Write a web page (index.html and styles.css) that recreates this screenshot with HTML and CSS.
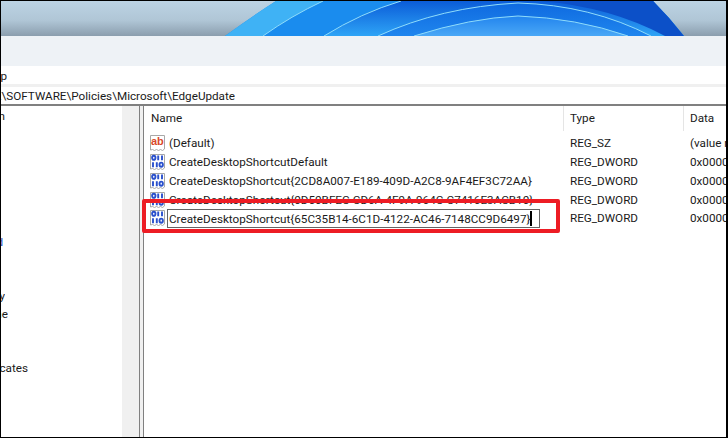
FILE: index.html
```html
<!DOCTYPE html>
<html lang="en">
<head>
  <meta charset="UTF-8">
  <meta name="viewport" content="width=device-width, initial-scale=1.0">
  <title>Registry Editor</title>
  <link rel="stylesheet" href="styles.css">
</head>
<body>
  <svg width="0" height="0" class="defs">
    <symbol id="page" viewBox="0 0 17 18">
      <path d="M1.5 1.5h14v13.5l-2 1.5-2-1-2 1-2-1-2 1-2-1-2 .5z" fill="#fff" stroke="#a8a8a8"/>
    </symbol>
    <symbol id="bin" viewBox="0 0 17 18">
      <use href="#page"/>
      <g fill="none" stroke="#2a50cc" stroke-width="1.9">
        <ellipse cx="4.8" cy="4.8" rx="1.7" ry="2.1"/>
        <path d="M9.2 2.4v4.8M13 2.4v4.8M4 9.2v5M7.8 9.2v5"/>
        <ellipse cx="12.2" cy="11.7" rx="1.7" ry="2.1"/>
      </g>
    </symbol>
  </svg>
  <div class="window">
    <div class="wallpaper">
      <svg viewBox="0 0 726 35" width="726" height="35" preserveAspectRatio="none">
        <defs>
          <linearGradient id="sky" x1="0" y1="0" x2="0" y2="1">
            <stop offset="0" stop-color="#bcd3e4"/>
            <stop offset=".55" stop-color="#b0c6d6"/>
            <stop offset="1" stop-color="#8b9eae"/>
          </linearGradient>
          <linearGradient id="band" x1="0" y1="0" x2="0" y2="1">
            <stop offset="0" stop-color="#0b5cd8"/>
            <stop offset="1" stop-color="#2ea4f6"/>
          </linearGradient>
          <linearGradient id="inner" x1="0" y1="0" x2="0" y2="1">
            <stop offset="0" stop-color="#0f6ae0"/>
            <stop offset="1" stop-color="#1f86ee"/>
          </linearGradient>
          <linearGradient id="low" x1="0" y1="0" x2="0" y2="1">
            <stop offset="0" stop-color="#2284ee"/>
            <stop offset="1" stop-color="#4aa8f6"/>
          </linearGradient>
        </defs>
        <rect width="726" height="35" fill="url(#sky)"/>
        <path d="M224 35 Q250 16 275 0 H652 Q668 16 683 35z" fill="#1a8cee"/>
        <path d="M224 35 Q250 16 275 0 H322 Q290 15 262 35z" fill="#3fb2f5"/>
        <path d="M323 35 Q360 12 400 0 H652 Q668 16 683 35z" fill="url(#band)"/>
        <path d="M377 35 Q440 6 517 2 Q590 4 650 35z" fill="url(#inner)"/>
        <path d="M413 35 Q470 17 517 15 Q575 17 627 35z" fill="url(#low)"/>
        <path d="M470 0 H652 Q668 16 683 35 H664 Q610 6 540 0z" fill="#0c50c8"/>
        <g fill="none" stroke="#8fdcfb" stroke-width="1">
          <path d="M262 35 Q290 15 322 0"/>
          <path d="M323 35 Q360 12 400 0"/>
          <path d="M377 35 Q440 6 517 2 Q590 4 650 35"/>
          <path d="M413 35 Q470 17 517 15 Q575 17 627 35"/>
        </g>
      </svg>
    </div>
    <div class="toolbar"></div>
    <div class="menu"><span class="end-clip">Help</span></div>
    <div class="address"><span class="end-clip path">Computer\HKEY_LOCAL_MACHINE\SOFTWARE\Policies\Microsoft\EdgeUpdate</span></div>
    <div class="panes">
      <div class="tree">
        <div class="tree-list">
          <div class="tree-row end-clip to-4">Windows Search</div>
          <div class="tree-row"></div>
          <div class="tree-row"></div>
          <div class="tree-row"></div>
          <div class="tree-row"></div>
          <div class="tree-row"></div>
          <div class="tree-row"></div>
          <div class="tree-row end-clip to-2 blue">Shield</div>
          <div class="tree-row"></div>
          <div class="tree-row"></div>
          <div class="tree-row end-clip to-4">Policy</div>
          <div class="tree-row end-clip to-8">Machine</div>
          <div class="tree-row"></div>
          <div class="tree-row"></div>
          <div class="tree-row end-clip to-28">SystemCertificates</div>
        </div>
        <div class="tree-scroll"></div>
      </div>
      <div class="splitter"></div>
      <div class="values">
        <div class="head">
          <div class="col col-name">Name</div>
          <div class="col col-type">Type</div>
          <div class="col col-data">Data</div>
        </div>
        <div class="row">
          <div class="cell col-name">
            <svg class="icon" viewBox="0 0 17 18"><use href="#page"/><text x="2" y="10.5" class="ab">ab</text></svg>
            <span>(Default)</span>
          </div>
          <div class="cell col-type">REG_SZ</div>
          <div class="cell col-data">(value not set)</div>
        </div>
        <div class="row">
          <div class="cell col-name">
            <svg class="icon" viewBox="0 0 17 18"><use href="#bin"/></svg>
            <span>CreateDesktopShortcutDefault</span>
          </div>
          <div class="cell col-type">REG_DWORD</div>
          <div class="cell col-data">0x00000000 (0)</div>
        </div>
        <div class="row">
          <div class="cell col-name">
            <svg class="icon" viewBox="0 0 17 18"><use href="#bin"/></svg>
            <span>CreateDesktopShortcut{2CD8A007-E189-409D-A2C8-9AF4EF3C72AA}</span>
          </div>
          <div class="cell col-type">REG_DWORD</div>
          <div class="cell col-data">0x00000000 (0)</div>
        </div>
        <div class="row">
          <div class="cell col-name">
            <svg class="icon" viewBox="0 0 17 18"><use href="#bin"/></svg>
            <span>CreateDesktopShortcut{0D50BFEC-CD6A-4F9A-964C-C7416E3ACB10}</span>
          </div>
          <div class="cell col-type">REG_DWORD</div>
          <div class="cell col-data">0x00000000 (0)</div>
        </div>
        <div class="row">
          <div class="cell col-name">
            <svg class="icon" viewBox="0 0 17 18"><use href="#bin"/></svg>
            <div class="edit"><span>CreateDesktopShortcut{65C35B14-6C1D-4122-AC46-7148CC9D6497}</span><i class="caret"></i></div>
          </div>
          <div class="cell col-type">REG_DWORD</div>
          <div class="cell col-data">0x00000000 (0)</div>
        </div>
      </div>
      <div class="highlight"></div>
    </div>
  </div>
</body>
</html>
```
FILE: styles.css
```css
* {
  box-sizing: border-box;
  margin: 0;
  padding: 0;
}

html, body {
  width: 728px;
  height: 438px;
  overflow: hidden;
}

body {
  font-family: Roboto, "Open Sans", sans-serif;
  font-size: 11.7px;
  color: #1a1a1a;
  background: #fff;
}

.defs {
  position: absolute;
}

.window {
  width: 728px;
  height: 438px;
  display: flex;
  flex-direction: column;
  border: 1px solid #000;
  border-right-width: 2px;
  overflow: hidden;
}

.wallpaper {
  height: 35px;
  flex: none;
  border-bottom: 1px solid #8a949c;
}

.wallpaper svg {
  display: block;
}

.toolbar {
  height: 30px;
  flex: none;
  background: #eef2f6;
}

/* text that runs off the left edge, kept in place by its right end */
.end-clip {
  display: flex;
  justify-content: flex-end;
  white-space: nowrap;
  overflow: hidden;
}

.menu {
  height: 18px;
  flex: none;
  background: #fff;
  line-height: 20px;
}

.menu .end-clip {
  width: 6px;
}

.address {
  height: 22px;
  flex: none;
  background: #fff;
  border-top: 3px solid #f0f0f0;
  border-bottom: 2px solid #808080;
  line-height: 19px;
}

.path {
  width: 234px;
}

.panes {
  flex: 1;
  display: flex;
  min-height: 0;
  position: relative;
}

.tree {
  width: 139px;
  flex: none;
  display: flex;
  border-right: 1px solid #808080;
}

.tree-list {
  flex: 1;
  min-width: 0;
  padding-top: 1px;
  overflow: hidden;
}

.tree-row {
  height: 18px;
  line-height: 18px;
}

.to-2 { width: 2px; }
.to-4 { width: 4px; }
.to-8 { width: 7px; }
.to-28 { width: 27px; }

.tree-row.blue {
  color: #1f4fc0;
}

.tree-scroll {
  width: 17px;
  flex: none;
  background: #f0f0f0;
}

.splitter {
  width: 4px;
  flex: none;
  background: #f0f0f0;
  border-right: 1px solid #808080;
}

.values {
  flex: 1;
  min-width: 0;
  overflow: hidden;
  padding-left: 1px;
}

.head {
  height: 25px;
  margin-bottom: 3.4px;
  display: flex;
  line-height: 25px;
}

.col-name {
  width: 419px;
  flex: none;
}

.col-type {
  width: 120px;
  flex: none;
}

.col-data {
  width: 60px;
  flex: none;
  white-space: nowrap;
}

.head .col {
  padding-left: 6px;
  border-right: 1px solid #e5e5e5;
}

.head .col-data {
  border-right: none;
}

.row {
  height: 18.75px;
  display: flex;
  line-height: 18px;
}

.cell {
  white-space: nowrap;
  overflow: hidden;
}

.cell.col-type,
.cell.col-data {
  padding-left: 6px;
}

.cell.col-name {
  display: flex;
  align-items: flex-start;
  padding-left: 4px;
  gap: 3px;
  overflow: visible;
}

.icon {
  width: 17px;
  height: 18px;
  flex: none;
}

.ab {
  font-family: "Liberation Sans", sans-serif;
  font-size: 11px;
  font-weight: 700;
  fill: #d9472b;
}

.edit {
  width: 373px;
  height: 19px;
  margin-left: -2px;
  padding-left: 1px;
  border: 1px solid #646464;
  background: #fff;
  display: flex;
  align-items: center;
  position: relative;
  z-index: 1;
}

.caret {
  width: 2px;
  height: 15px;
  background: #000;
  flex: none;
}

.highlight {
  position: absolute;
  left: 141px;
  top: 93px;
  width: 418px;
  height: 34px;
  border: 4px solid #ed1c24;
  border-radius: 2px;
  z-index: 2;
  pointer-events: none;
}
```
